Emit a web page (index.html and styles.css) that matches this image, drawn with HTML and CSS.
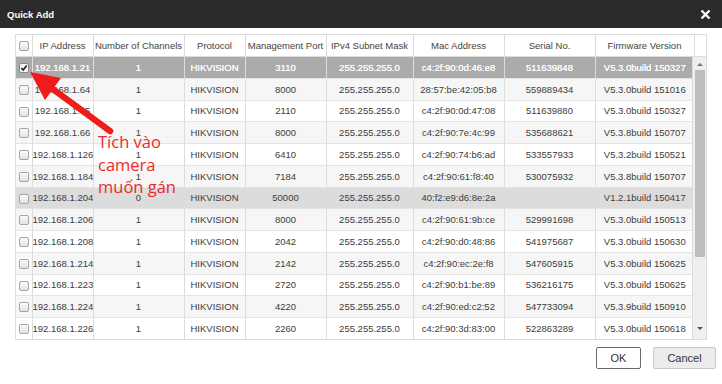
FILE: index.html
```html
<!DOCTYPE html>
<html>
<head>
    <meta charset="UTF-8">
    <title>Quick Add</title>
    <link rel="stylesheet" href="styles.css">
</head>
<body>
<div class="dialog">
    <div class="titlebar">
        <span class="title">Quick Add</span>
        <svg class="close" width="11" height="11" viewBox="0 0 11 11">
            <path d="M1.5 1.5 L9.5 9.5 M9.5 1.5 L1.5 9.5" stroke="#fff" stroke-width="2.4"/>
        </svg>
    </div>

    <div class="content">
        <div class="grid">
            <table class="head">
                <colgroup>
                    <col class="c-cb"><col class="c-ip"><col class="c-ch"><col class="c-pr"><col class="c-port">
                    <col class="c-mask"><col class="c-mac"><col class="c-sn"><col class="c-fw"><col class="c-sb">
                </colgroup>
                <tr>
                    <th><span class="box"></span></th>
                    <th>IP Address</th>
                    <th>Number of Channels</th>
                    <th>Protocol</th>
                    <th>Management Port</th>
                    <th>IPv4 Subnet Mask</th>
                    <th>Mac Address</th>
                    <th>Serial No.</th>
                    <th>Firmware Version</th>
                    <th></th>
                </tr>
            </table>
            <div class="body-wrap">
                <div class="body-scroll">
                    <table class="rows">
                        <colgroup>
                            <col class="c-cb"><col class="c-ip"><col class="c-ch"><col class="c-pr"><col class="c-port">
                            <col class="c-mask"><col class="c-mac"><col class="c-sn"><col class="c-fw">
                        </colgroup>
                        <tr class="selected">
                            <td><span class="box checked"><svg width="8" height="8" viewBox="0 0 9 9"><path d="M1.5 4.5 L3.6 6.8 L7.6 1.6" stroke="#222" stroke-width="1.9" fill="none"/></svg></span></td>
                            <td>192.168.1.21</td><td>1</td><td>HIKVISION</td><td>3110</td><td>255.255.255.0</td><td>c4:2f:90:0d:46:e8</td><td>511639848</td><td>V5.3.0build 150327</td>
                        </tr>
                        <tr>
                            <td><span class="box"></span></td>
                            <td>192.168.1.64</td><td>1</td><td>HIKVISION</td><td>8000</td><td>255.255.255.0</td><td>28:57:be:42:05:b8</td><td>559889434</td><td>V5.3.0build 151016</td>
                        </tr>
                        <tr>
                            <td><span class="box"></span></td>
                            <td>192.168.1.65</td><td>1</td><td>HIKVISION</td><td>2110</td><td>255.255.255.0</td><td>c4:2f:90:0d:47:08</td><td>511639880</td><td>V5.3.0build 150327</td>
                        </tr>
                        <tr>
                            <td><span class="box"></span></td>
                            <td>192.168.1.66</td><td>1</td><td>HIKVISION</td><td>8000</td><td>255.255.255.0</td><td>c4:2f:90:7e:4c:99</td><td>535688621</td><td>V5.3.8build 150707</td>
                        </tr>
                        <tr>
                            <td><span class="box"></span></td>
                            <td>192.168.1.126</td><td>1</td><td>HIKVISION</td><td>6410</td><td>255.255.255.0</td><td>c4:2f:90:74:b6:ad</td><td>533557933</td><td>V5.3.2build 150521</td>
                        </tr>
                        <tr>
                            <td><span class="box"></span></td>
                            <td>192.168.1.184</td><td>1</td><td>HIKVISION</td><td>7184</td><td>255.255.255.0</td><td>c4:2f:90:61:f8:40</td><td>530075932</td><td>V5.3.8build 150707</td>
                        </tr>
                        <tr class="offline">
                            <td><span class="box"></span></td>
                            <td>192.168.1.204</td><td>0</td><td>HIKVISION</td><td>50000</td><td>255.255.255.0</td><td>40:f2:e9:d6:8e:2a</td><td></td><td>V1.2.1build 150417</td>
                        </tr>
                        <tr>
                            <td><span class="box"></span></td>
                            <td>192.168.1.206</td><td>1</td><td>HIKVISION</td><td>8000</td><td>255.255.255.0</td><td>c4:2f:90:61:9b:ce</td><td>529991698</td><td>V5.3.0build 150513</td>
                        </tr>
                        <tr>
                            <td><span class="box"></span></td>
                            <td>192.168.1.208</td><td>1</td><td>HIKVISION</td><td>2042</td><td>255.255.255.0</td><td>c4:2f:90:d0:48:86</td><td>541975687</td><td>V5.3.0build 150630</td>
                        </tr>
                        <tr>
                            <td><span class="box"></span></td>
                            <td>192.168.1.214</td><td>1</td><td>HIKVISION</td><td>2142</td><td>255.255.255.0</td><td>c4:2f:90:ec:2e:f8</td><td>547605915</td><td>V5.3.0build 150625</td>
                        </tr>
                        <tr>
                            <td><span class="box"></span></td>
                            <td>192.168.1.223</td><td>1</td><td>HIKVISION</td><td>2720</td><td>255.255.255.0</td><td>c4:2f:90:b1:be:89</td><td>536216175</td><td>V5.3.0build 150625</td>
                        </tr>
                        <tr>
                            <td><span class="box"></span></td>
                            <td>192.168.1.224</td><td>1</td><td>HIKVISION</td><td>4220</td><td>255.255.255.0</td><td>c4:2f:90:ed:c2:52</td><td>547733094</td><td>V5.3.9build 150910</td>
                        </tr>
                        <tr>
                            <td><span class="box"></span></td>
                            <td>192.168.1.226</td><td>1</td><td>HIKVISION</td><td>2260</td><td>255.255.255.0</td><td>c4:2f:90:3d:83:00</td><td>522863289</td><td>V5.3.0build 150618</td>
                        </tr>
                    </table>
                </div>
                <div class="scrollbar">
                    <span class="arrow up"></span>
                    <span class="thumb"></span>
                    <span class="arrow down"></span>
                </div>
            </div>
        </div>

        <div class="buttons">
            <button class="btn ok">OK</button>
            <button class="btn cancel">Cancel</button>
        </div>
    </div>

    <!-- annotation drawn over the list -->
    <svg class="pointer" width="130" height="150" viewBox="0 0 130 150">
        <line x1="110" y1="131" x2="50" y2="87" stroke="#f01c1c" stroke-width="6.5" stroke-linecap="round"/>
        <polygon points="30,72 61,78 45,100" fill="#f01c1c"/>
    </svg>
    <div class="note">Tích vào<br>camera<br>muốn gán</div>
</div>
</body>
</html>
```

FILE: styles.css
```css
body {
    margin: 0;
    background-color: #fff;
    font-family: "Liberation Sans", Arial, sans-serif;
}
.dialog {
    position: relative;
    width: 722px;
    height: 384px;
    overflow: hidden;
}
.titlebar {
    height: 28px;
    background-color: #2b2b2b;
    display: flex;
    align-items: center;
    justify-content: space-between;
    padding: 0 11px 0 7px;
}
.title {
    color: #fff;
    font-weight: bold;
    font-size: 9.5px;
}
.content {
    padding: 6px 0 0 15px;
}
.grid {
    width: 692px;
    border: 1px solid #dcdcdc;
    box-sizing: border-box;
}
table {
    border-collapse: collapse;
    table-layout: fixed;
}
table.head {
    width: 690px;
}
table.rows {
    width: 677px;
}
.c-cb { width: 16px; }
.c-ip { width: 61px; }
.c-ch { width: 91px; }
.c-pr { width: 61px; }
.c-port { width: 81px; }
.c-mask { width: 87px; }
.c-mac { width: 91px; }
.c-sn { width: 91px; }
.c-fw { width: 99px; }
.c-sb { width: 13px; }
th, td {
    border-left: 1px solid #dcdcdc;
    text-align: center;
    font-size: 9.5px;
    color: #3c3c3c;
    white-space: nowrap;
    overflow: hidden;
    padding: 0;
}
th:first-child, td:first-child {
    border-left: none;
}
th {
    height: 21px;
    font-weight: normal;
    color: #444;
    border-bottom: 1px solid #dcdcdc;
}
td {
    height: 20.75px;
    border-bottom: 1px solid #e4e4e4;
}
tr:nth-child(even) td {
    background-color: #f6f6f6;
}
tr.selected td {
    background-color: #ababab;
    color: #fff;
    text-shadow: 0 0 0.4px #fff;
}
tr.offline td {
    background-color: #dcdcdc;
}
.box {
    display: inline-block;
    width: 8px;
    height: 8px;
    border: 1px solid #a6a6a6;
    border-radius: 2px;
    background: linear-gradient(#fbfbfb, #e2e2e2);
    vertical-align: middle;
}
.box.checked {
    background: #f4f4f4;
    border-color: #8a8a8a;
}
.box svg {
    display: block;
}
.body-wrap {
    display: flex;
    height: 282px;
}
.body-scroll {
    width: 677px;
    overflow: hidden;
}
.scrollbar {
    width: 13px;
    border-left: 1px solid #dcdcdc;
    background-color: #eef0ee;
    display: flex;
    flex-direction: column;
    align-items: center;
}
.arrow {
    width: 0;
    height: 0;
    border-left: 3px solid transparent;
    border-right: 3px solid transparent;
}
.arrow.up {
    border-bottom: 3px solid #777;
    margin-top: 6px;
}
.arrow.down {
    border-top: 3px solid #555;
    margin-top: auto;
    margin-bottom: 9px;
}
.thumb {
    width: 10px;
    height: 187px;
    margin-top: 4px;
    background-color: #bdbdbd;
    border-radius: 1px;
}
.buttons {
    display: flex;
    justify-content: flex-end;
    gap: 12px;
    padding: 7px 6px 0 0;
}
.btn {
    height: 22px;
    font-family: "Liberation Sans", Arial, sans-serif;
    font-size: 11px;
    color: #333;
    border-radius: 2px;
    padding: 0;
}
.ok {
    width: 45px;
    background-color: #fff;
    border: 1px solid #6a6a6a;
}
.cancel {
    width: 63px;
    background-color: #ececec;
    border: 1px solid #c8c8c8;
}
.pointer {
    position: absolute;
    left: 0;
    top: 0;
}
.note {
    position: absolute;
    left: 98px;
    top: 131px;
    color: #ee2a2a;
    font-family: "Open Sans", "Noto Sans", sans-serif;
    font-size: 16.5px;
    line-height: 22.5px;
}
```
